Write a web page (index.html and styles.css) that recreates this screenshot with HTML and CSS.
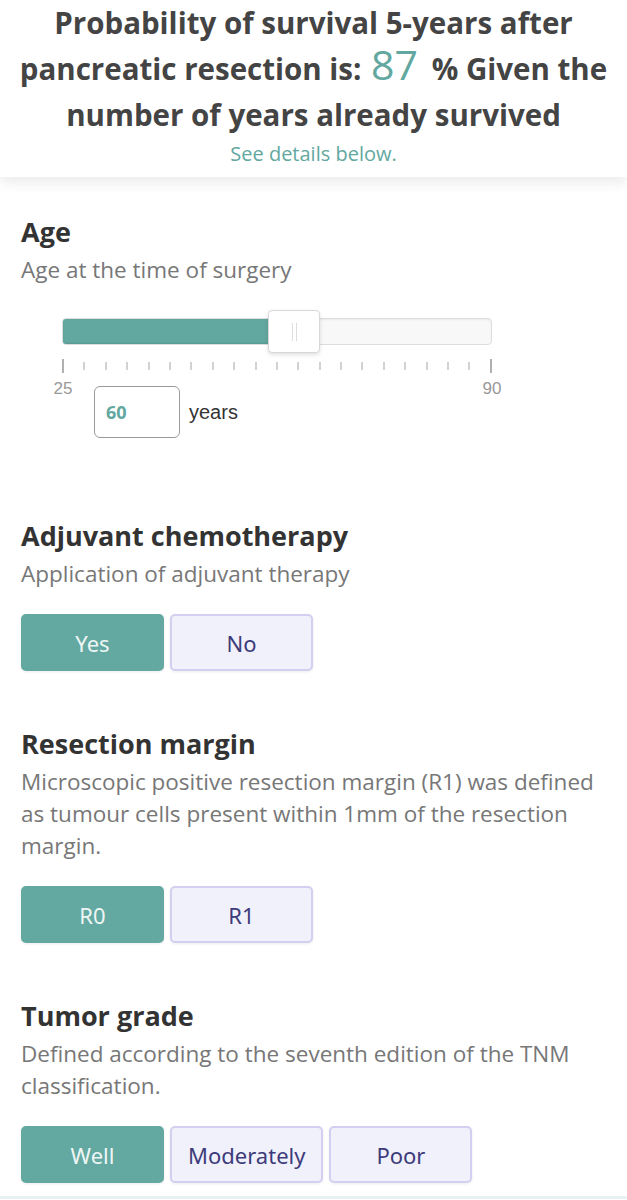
FILE: index.html
```html
<!DOCTYPE html>
<html lang="en">

<head>
    <meta charset="UTF-8">
    <meta name="viewport" content="width=device-width, initial-scale=1.0">
    <title>Pancreatic resection survival</title>
    <link rel="stylesheet" href="styles.css">
</head>

<body>
    <div id="resultBox">
        <h1>Probability of survival 5-years after pancreatic resection is: <span class="big">87</span> % Given the number of years already survived</h1>
        <p class="details">See details below.</p>
    </div>

    <div id="formBox">
        <div class="section age">
            <h2>Age</h2>
            <p class="desc">Age at the time of surgery</p>
            <div class="slider">
                <div class="track">
                    <div class="fill" style="width: 212px"></div>
                    <div class="handle" style="left: 205px"><span></span><span></span></div>
                </div>
                <div class="ticks">
                    <i class="major"></i><i></i><i></i><i></i><i></i><i></i><i></i><i></i><i></i><i></i><i></i><i></i><i></i><i></i><i></i><i></i><i></i><i></i><i></i><i></i><i class="major"></i>
                    <span class="lbl min">25</span>
                    <span class="lbl max">90</span>
                </div>
            </div>
            <div class="ageInput">
                <input type="text" value="60">
                <span>years</span>
            </div>
        </div>

        <div class="section">
            <h2>Adjuvant chemotherapy</h2>
            <p class="desc">Application of adjuvant therapy</p>
            <div class="choices">
                <button class="on">Yes</button>
                <button>No</button>
            </div>
        </div>

        <div class="section">
            <h2>Resection margin</h2>
            <p class="desc">Microscopic positive resection margin (R1) was defined as tumour cells present within 1mm of the resection margin.</p>
            <div class="choices">
                <button class="on">R0</button>
                <button>R1</button>
            </div>
        </div>

        <div class="section last">
            <h2>Tumor grade</h2>
            <p class="desc">Defined according to the seventh edition of the TNM classification.</p>
            <div class="choices">
                <button class="on">Well</button>
                <button>Moderately</button>
                <button>Poor</button>
            </div>
        </div>
    </div>
    <div class="nextBar"></div>
</body>

</html>
```

FILE: styles.css
```css
* {
    box-sizing: border-box;
    margin: 0;
    padding: 0;
}
body {
    font-family: "Open Sans", "Noto Sans", sans-serif;
    background-color: #fff;
    color: #333;
    overflow: hidden;
}
#resultBox {
    text-align: center;
    padding: 0 10px 11px 10px;
    background-color: #fff;
    box-shadow: 0 6px 12px rgba(0, 0, 0, 0.08);
    position: relative;
}
h1 {
    font-size: 29.5px;
    line-height: 46px;
    font-weight: 700;
    color: #444;
}
.big {
    font-size: 41px;
    line-height: 0;
    font-weight: 400;
    color: #62a8a0;
    padding: 0 6px 0 2px;
}
.details {
    font-size: 20px;
    line-height: 24px;
    margin-top: 4px;
    color: #62a8a0;
}
#formBox {
    padding: 35px 21px 0 21px;
}
.section {
    padding-bottom: 53px;
}
.section.age {
    padding-bottom: 78px;
}
.section.last {
    padding-bottom: 13px;
}
h2 {
    font-size: 27px;
    line-height: 40px;
    font-weight: 700;
    color: #333;
    margin-bottom: 2px;
}
.desc {
    font-size: 22.5px;
    line-height: 32px;
    color: #777;
}
.slider {
    width: 430px;
    margin: 32px 0 0 41px;
}
.track {
    position: relative;
    height: 27px;
    background-color: #f8f8f8;
    border: 1px solid #ddd;
    border-radius: 4px;
    box-shadow: inset 0 1px 2px rgba(0, 0, 0, 0.06);
}
.fill {
    height: 100%;
    background-color: #62a8a0;
    border-radius: 3px 0 0 3px;
    box-shadow: inset 0 -1px 2px rgba(0, 0, 0, 0.1);
}
.handle {
    position: absolute;
    top: -9px;
    width: 52px;
    height: 43px;
    background-color: #fff;
    border: 1px solid #d8d8d8;
    border-radius: 4px;
    box-shadow: 0 2px 4px rgba(0, 0, 0, 0.12);
    display: flex;
    justify-content: center;
    align-items: center;
    gap: 3px;
}
.handle span {
    width: 1px;
    height: 18px;
    background-color: #ddd;
}
.ticks {
    position: relative;
    display: flex;
    justify-content: space-between;
    align-items: center;
    height: 14px;
    margin-top: 14px;
}
.ticks i {
    width: 2px;
    height: 8px;
    background-color: #d2d2d2;
}
.ticks i.major {
    width: 2px;
    height: 14px;
    background-color: #b0b0b0;
}
.lbl {
    position: absolute;
    top: 20px;
    font-family: "Liberation Sans", Arial, sans-serif;
    font-size: 17px;
    color: #999;
    transform: translateX(-50%);
}
.lbl.min {
    left: 1px;
}
.lbl.max {
    left: 430px;
}
.ageInput {
    display: flex;
    align-items: center;
    gap: 9px;
    margin: 13px 0 0 73px;
}
.ageInput input {
    width: 86px;
    height: 52px;
    border: 1px solid #999;
    border-radius: 6px;
    padding-left: 11px;
    font-family: "Open Sans", sans-serif;
    font-size: 18px;
    font-weight: 700;
    color: #62a8a0;
    outline: none;
}
.ageInput span {
    font-family: "Liberation Sans", Arial, sans-serif;
    font-size: 20px;
    color: #333;
}
.choices {
    display: flex;
    gap: 6px;
    margin-top: 24px;
}
.choices button {
    min-width: 143px;
    height: 57px;
    padding: 0 16px;
    font-family: "Noto Sans", "Open Sans", sans-serif;
    font-size: 22px;
    color: #3d3b7a;
    background-color: #f0f1fb;
    border: 2px solid #d2cff0;
    border-radius: 5px;
    box-shadow: 0 1px 3px rgba(0, 0, 0, 0.08);
}
.choices button.on {
    color: #eef6f5;
    background-color: #64a9a1;
    border-color: #64a9a1;
}
.nextBar {
    height: 4px;
    border-top: 3px solid #e8f1f4;
}
```
